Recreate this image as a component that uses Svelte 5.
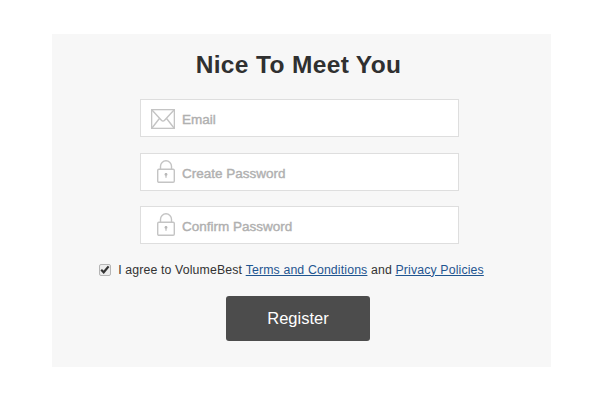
<script>
	let email = $state('');
	let password = $state('');
	let confirmation = $state('');
	let agreed = $state(true);

	function handleSubmit(event) {
		event.preventDefault();
	}
</script>

{#snippet lock()}
	<svg class="lock" width="18" height="23" viewBox="0 0 18 23" aria-hidden="true">
		<path d="M3.5 9V6.3a5.5 5.5 0 0 1 11 0V9" />
		<rect x="0.7" y="9.3" width="16.6" height="13" rx="1.2" />
		<circle class="keyhole" cx="9" cy="14.5" r="1.4" />
		<path d="M9 14.5v3.2" />
	</svg>
{/snippet}

<div class="page">
	<form class="panel" onsubmit={handleSubmit}>
		<h1>Nice To Meet You</h1>

		<label class="field">
			<span class="icon">
				<svg class="mail" width="24" height="20" viewBox="0 0 24 20" aria-hidden="true">
					<rect x="0.6" y="0.6" width="22.8" height="18.8" />
					<path d="M1 1l9.4 10.2q1.6 1.8 3.2 0L23 1M1 19l7.4-9.5M23 19l-7.4-9.5" />
				</svg>
			</span>
			<input class="email" type="email" placeholder="Email" bind:value={email} />
		</label>

		<label class="field">
			<span class="icon">{@render lock()}</span>
			<input type="password" placeholder="Create Password" bind:value={password} />
		</label>

		<label class="field">
			<span class="icon">{@render lock()}</span>
			<input type="password" placeholder="Confirm Password" bind:value={confirmation} />
		</label>

		<div class="terms">
			<label class="check">
				<input type="checkbox" bind:checked={agreed} />
				<span class="box">
					{#if agreed}
						<svg width="10" height="9" viewBox="0 0 10 9" aria-hidden="true">
							<path d="M1.2 4.8l2.5 2.5L8.6 1.4" />
						</svg>
					{/if}
				</span>
				<span>I agree to VolumeBest</span>
			</label>
			<span>&nbsp;<a href="#terms">Terms and Conditions</a> and <a href="#privacy">Privacy Policies</a></span>
		</div>

		<button type="submit">Register</button>
	</form>
</div>

<style>
	:global(body) {
		background: #fff;
	}

	.page {
		box-sizing: border-box;
		height: 400px;
		padding: 34px 49px 33px 52px;
		font-family: 'Liberation Sans', Arial, sans-serif;
		color: #333;
	}

	.panel {
		box-sizing: border-box;
		display: flex;
		flex-direction: column;
		align-items: center;
		height: 333px;
		padding-top: 16px;
		background: #f7f7f7;
	}

	h1 {
		margin: 0 0 19px;
		padding-right: 6px;
		font-size: 24.5px;
		line-height: 30px;
		letter-spacing: 0.35px;
		color: #303030;
	}

	.field {
		box-sizing: border-box;
		display: flex;
		align-items: center;
		width: 319px;
		height: 38px;
		margin: 0 4px 15.6px 0;
		padding-left: 10px;
		border: 1px solid #dedede;
		background: #fff;
	}

	.icon {
		display: flex;
		justify-content: flex-end;
		width: 24px;
		margin-right: 7px;
	}

	.icon svg {
		fill: none;
		stroke: #c4c4c4;
		stroke-width: 1.4;
	}

	.icon .mail {
		margin-top: 2px;
	}

	.icon .lock {
		margin-bottom: 1px;
	}

	.icon .keyhole {
		fill: #b4b4b4;
		stroke: none;
	}

	.field input {
		flex: 1;
		min-width: 0;
		padding: 3px 0 0;
		border: 0;
		outline: 0;
		background: transparent;
		font: 13.5px 'Liberation Sans', Arial, sans-serif;
		color: #666;
	}

	.field input::placeholder {
		color: #b0b0b0;
		opacity: 1;
		-webkit-text-stroke: 0.4px #b0b0b0;
	}

	.terms {
		display: flex;
		align-items: center;
		height: 18px;
		margin: 1px 20px 0 0;
		font-size: 12.3px;
		letter-spacing: 0.14px;
		white-space: nowrap;
	}

	.check {
		display: flex;
		align-items: center;
	}

	.check input {
		position: absolute;
		opacity: 0;
	}

	.box {
		box-sizing: border-box;
		display: flex;
		align-items: center;
		justify-content: center;
		width: 12px;
		height: 12px;
		margin-right: 7px;
		border: 1px solid #b5b5b5;
		border-radius: 2px;
		background: #ececec;
	}

	.box svg {
		flex: none;
		fill: none;
		stroke: #333;
		stroke-width: 2.2;
	}

	a {
		color: #1f5590;
	}

	button {
		width: 144px;
		height: 45px;
		margin: 17px 7px 0 0;
		padding: 0;
		border: 0;
		border-radius: 3px;
		background: #4c4c4c;
		font: 16.5px 'Liberation Sans', Arial, sans-serif;
		color: #fff;
	}
</style>
